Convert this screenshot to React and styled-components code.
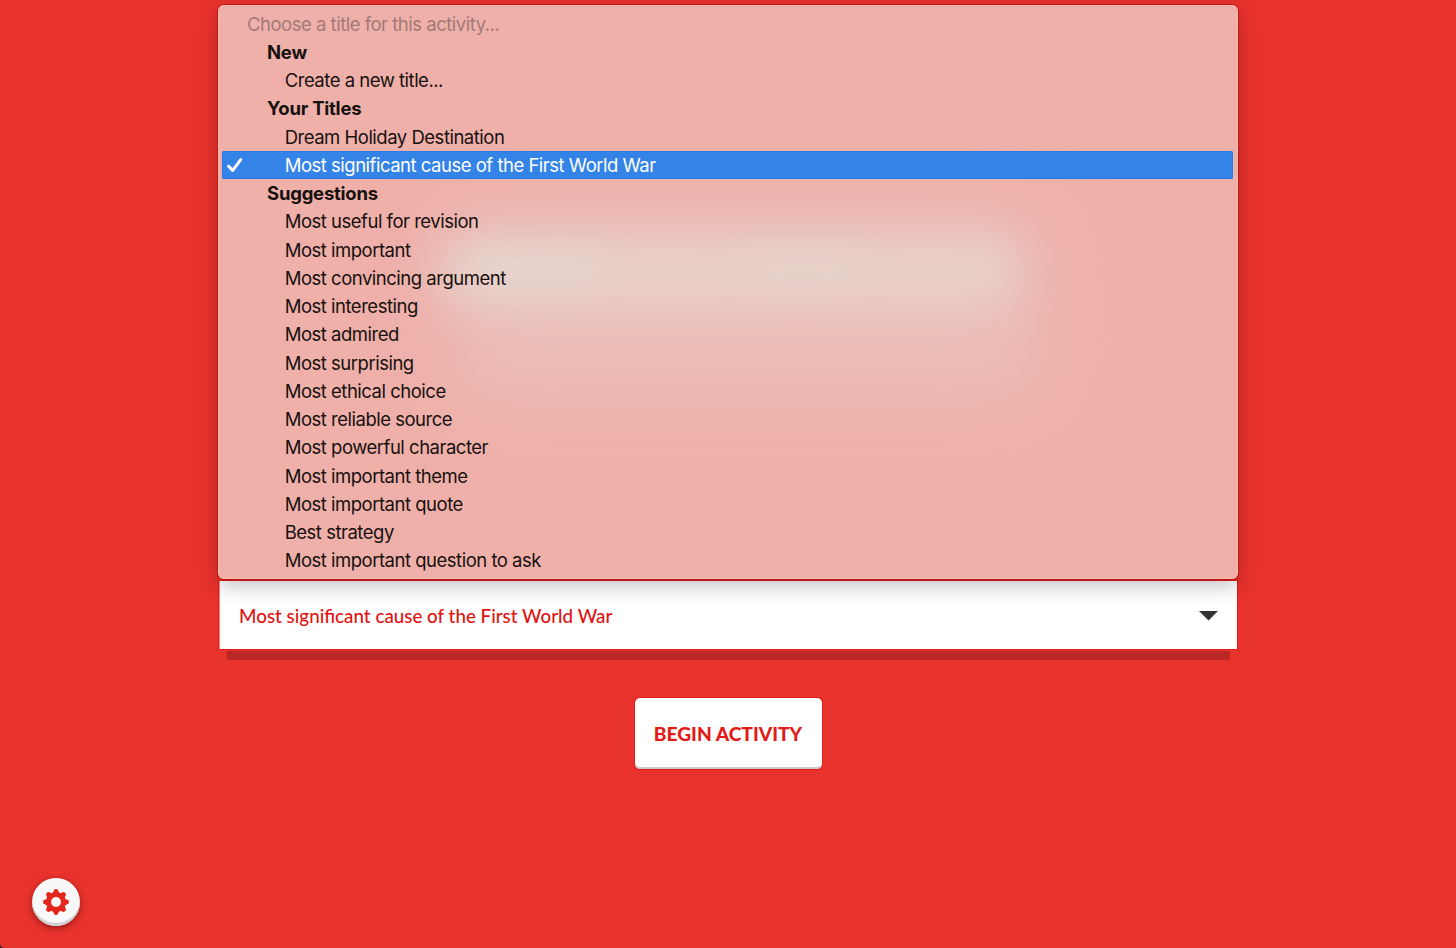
import styled, { createGlobalStyle } from "styled-components"

const GlobalStyle = createGlobalStyle`
    * {
        box-sizing: border-box;
    }
    body {
        margin: 0;
        background: #e8322c;
        overflow: hidden;
    }
`
const Page = styled.main`
    position: relative;
    display: flex;
    flex-direction: column;
    align-items: center;
    width: 1456px;
    height: 948px;
    padding-top: 5px;
    background: #e8322c;
    overflow: hidden;
`
const Menu = styled.div`
    position: relative;
    z-index: 1;
    isolation: isolate;
    width: 1020px;
    height: 574px;
    padding: 4.6px 4px 0;
    border-radius: 6px;
    background: #efb0aa;
    box-shadow: 0 0 0 1px rgba(190, 15, 15, 0.75), 0 7px 20px rgba(0, 0, 0, 0.24), inset 0 0 0 1px rgba(255, 200, 190, 0.5);
`
//the page title, seen blurred through the menu
const Glow = styled.div`
    position: absolute;
    z-index: -1;
    left: ${({ $x }) => $x}px;
    top: ${({ $y }) => $y}px;
    width: ${({ $w }) => $w}px;
    height: ${({ $h }) => $h}px;
    border-radius: 30px;
    background: ${({ $color }) => $color};
    filter: blur(${({ $blur }) => $blur}px);
`
const Row = styled.div`
    display: flex;
    align-items: center;
    height: 28.26px;
    padding-left: ${({ $kind }) => ({ hint: 25, group: 45 }[$kind] || 62.7)}px;
    border-radius: 2px;
    font-family: Inter, "Liberation Sans", sans-serif;
    font-size: 18.5px;
    font-weight: ${({ $kind }) => ($kind === "group" ? 700 : 400)};
    letter-spacing: ${({ $kind }) => ($kind === "group" ? -0.23 : -0.49)}px;
    white-space: nowrap;
    color: ${({ $kind }) => ($kind === "hint" ? "#a17a76" : "#17110f")};
`
const SelectedRow = styled(Row)`
    width: 1011px;
    padding-left: 5px;
    background: #3484e8;
    box-shadow: inset 0 0 0 1px #247bea;
    color: #fff;
`
const Check = styled.svg`
    width: 16px;
    height: 16px;
    margin-right: 41.7px;
`
const SelectBox = styled.div`
    display: flex;
    align-items: center;
    justify-content: space-between;
    width: 1018px;
    height: 68px;
    margin-top: 2px;
    padding: 0 19px 0 20px;
    background: #fff;
    box-shadow: inset 1px 0 0 #f58a86, 0 0 0 1px #e31d18;
`
const SelectText = styled.span`
    font-family: Lato, sans-serif;
    font-size: 18.8px;
    font-weight: 500;
    white-space: nowrap;
    color: #e3120f;
`
const Arrow = styled.svg`
    width: 19px;
    height: 10px;
    margin-top: 2px;
`
const SelectShade = styled.div`
    width: 1003px;
    height: 9px;
    margin: 2px 0 38px;
    background: #b92824;
`
const BeginButton = styled.button`
    width: 187px;
    height: 71px;
    padding: 0;
    border: 0;
    border-radius: 5px;
    background: #fff;
    box-shadow: inset 0 -2px 0 #c9cccc, 0 0 0 1px #e31d18;
    font-family: Lato, sans-serif;
    font-size: 19.2px;
    font-weight: 900;
    white-space: nowrap;
    color: #e31b18;
`
const SettingsButton = styled.button`
    position: absolute;
    left: 32px;
    bottom: 22px;
    display: flex;
    align-items: center;
    justify-content: center;
    width: 48px;
    height: 48px;
    padding: 0;
    border: 0;
    border-radius: 50%;
    background: #f8f8f8;
    box-shadow: inset 0 -3px 0 #cfd2d2, 0 2px 6px rgba(70, 0, 0, 0.55);
`
const Corner = styled.svg`
    position: absolute;
    left: 0;
    bottom: 0;
    width: 4px;
    height: 4px;
`

const rows = [
    { kind: "hint", text: "Choose a title for this activity..." },
    { kind: "group", text: "New" },
    { text: "Create a new title..." },
    { kind: "group", text: "Your Titles" },
    { text: "Dream Holiday Destination" },
    { text: "Most significant cause of the First World War", selected: true },
    { kind: "group", text: "Suggestions" },
    { text: "Most useful for revision" },
    { text: "Most important" },
    { text: "Most convincing argument" },
    { text: "Most interesting" },
    { text: "Most admired" },
    { text: "Most surprising" },
    { text: "Most ethical choice" },
    { text: "Most reliable source" },
    { text: "Most powerful character" },
    { text: "Most important theme" },
    { text: "Most important quote" },
    { text: "Best strategy" },
    { text: "Most important question to ask" },
]

//eight soft teeth around the hub
const gearPoints = Array.from({ length: 144 }, (_, i) => {
    const a = (i / 144) * Math.PI * 2
    const r = 11.4 + 1.6 * Math.tanh(1.6 * Math.cos(8 * a) + 0.1)
    return `${(14 + r * Math.cos(a)).toFixed(2)},${(14 + r * Math.sin(a)).toFixed(2)}`
}).join(" ")

function MenuItem({ kind, text, selected }) {
    if (selected) {
        return (
            <SelectedRow>
                <Check viewBox="0 0 16 16">
                    <path d="M1.6 9.2 L5.7 13.4 L13.7 2.6" fill="none" stroke="#fff" strokeWidth="3" strokeLinecap="round" strokeLinejoin="round" />
                </Check>
                <span>{text}</span>
            </SelectedRow>
        )
    }
    return <Row $kind={kind}>{text}</Row>
}

export default function App() {
    return (
        <Page>
            <GlobalStyle />
            <Menu>
                <Glow $x={235} $y={212} $w={590} $h={180} $blur={36} $color="rgba(235, 193, 186, 0.85)" />
                <Glow $x={220} $y={230} $w={580} $h={72} $blur={23} $color="rgba(231, 211, 205, 0.85)" />
                <Glow $x={250} $y={250} $w={130} $h={28} $blur={18} $color="rgba(228, 216, 214, 0.6)" />
                <Glow $x={520} $y={250} $w={130} $h={28} $blur={18} $color="rgba(229, 214, 209, 0.4)" />
                {rows.map((row) => (
                    <MenuItem key={row.text} {...row} />
                ))}
            </Menu>
            <SelectBox>
                <SelectText>Most significant cause of the First World War</SelectText>
                <Arrow viewBox="0 0 19 10">
                    <path d="M0 0 H19 L9.5 9.5 Z" fill="#333" />
                </Arrow>
            </SelectBox>
            <SelectShade />
            <BeginButton>BEGIN ACTIVITY</BeginButton>
            <SettingsButton aria-label="Settings">
                <svg width="28" height="28" viewBox="0 0 28 28">
                    <polygon points={gearPoints} fill="#e5261f" />
                    <circle cx="14" cy="14" r="4.9" fill="#f8f8f8" />
                </svg>
            </SettingsButton>
            <Corner viewBox="0 0 4 4">
                <path d="M0 0 Q0.5 3.5 4 4 H0 Z" fill="#222" />
            </Corner>
        </Page>
    )
}
